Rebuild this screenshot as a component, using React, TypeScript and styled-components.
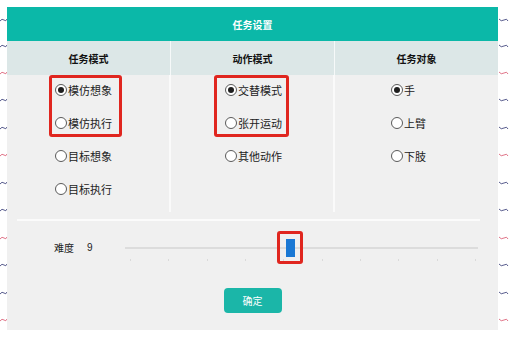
import styled, { createGlobalStyle } from "styled-components";

const GlobalStyle = createGlobalStyle`
  html, body {
    margin: 0;
    padding: 0;
    background: #ffffff;
  }
  body {
    font-family: "Noto Sans CJK SC", "Noto Sans", sans-serif;
  }
`;

type Option = { label: string; checked?: boolean };
type Column = {
  title: string;
  indent: number;
  options: Option[];
  mark?: { left: number; width: number };
};

const columns: Column[] = [
  {
    title: "任务模式",
    indent: 48,
    options: [
      { label: "模仿想象", checked: true },
      { label: "模仿执行" },
      { label: "目标想象" },
      { label: "目标执行" },
    ],
    mark: { left: 42, width: 73 },
  },
  {
    title: "动作模式",
    indent: 54,
    options: [
      { label: "交替模式", checked: true },
      { label: "张开运动" },
      { label: "其他动作" },
    ],
    mark: { left: 43, width: 75 },
  },
  {
    title: "任务对象",
    indent: 56,
    options: [{ label: "手", checked: true }, { label: "上臂" }, { label: "下肢" }],
  },
];

const difficulty = { value: 9, min: 0, max: 19.2 };

function Waves({ side }: { side: "left" | "right" }) {
  const ys = [20, 46, 73, 100, 128, 155, 183, 210, 238, 265, 293, 320];
  const w = side === "left" ? 7 : 11;
  return (
    <WaveStrip width={w} height={341} viewBox={`0 0 ${w} 341`}>
      {ys.map((y, i) => (
        <path
          key={y}
          d={
            side === "left"
              ? `M0 ${y + 1} Q2 ${y - 2} 4 ${y} T7 ${y - 1}`
              : `M1 ${y - 1} Q3 ${y + 2} 6 ${y} T10 ${y + 1}`
          }
          stroke={i % 3 === 2 ? "#d8506a" : "#2d3270"}
          strokeWidth={0.8}
          fill="none"
        />
      ))}
    </WaveStrip>
  );
}

export default function App() {
  const pct = ((difficulty.value - difficulty.min) / (difficulty.max - difficulty.min)) * 100;
  return (
    <>
      <GlobalStyle />
      <Page>
        <Waves side="left" />
        <Dialog>
          <Title>任务设置</Title>
          <HeadRow>
            {columns.map((c) => (
              <HeadCell key={c.title}>{c.title}</HeadCell>
            ))}
          </HeadRow>
          <Body>
            {columns.map((c) => (
              <OptionColumn key={c.title} indent={c.indent}>
                {c.options.map((o) => (
                  <RadioRow key={o.label}>
                    <RadioDot checked={!!o.checked} />
                    {o.label}
                  </RadioRow>
                ))}
                {c.mark && <Mark style={{ left: c.mark.left, width: c.mark.width }} />}
              </OptionColumn>
            ))}
          </Body>
          <Separator />
          <DifficultyRow>
            <Label>难度</Label>
            <Value>{difficulty.value}</Value>
            <Slider>
              <Track />
              <Ticks>
                {Array.from({ length: 10 }).map((_, i) => (
                  <Tick key={i} />
                ))}
              </Ticks>
              <Thumb style={{ left: `${pct}%` }}>
                <ThumbBar />
              </Thumb>
            </Slider>
          </DifficultyRow>
          <Footer>
            <ConfirmButton>确定</ConfirmButton>
          </Footer>
        </Dialog>
        <Waves side="right" />
      </Page>
    </>
  );
}

const Page = styled.div`
  display: flex;
  align-items: flex-start;
  width: 509px;
  height: 341px;
  overflow: hidden;
`;

const WaveStrip = styled.svg`
  flex: none;
  display: block;
`;

const Dialog = styled.div`
  flex: none;
  width: 491px;
  height: 323px;
  margin-top: 7px;
  background: #f0f0f0;
  display: flex;
  flex-direction: column;
`;

const Title = styled.div`
  height: 34px;
  background: #0bb8a8;
  color: #ffffff;
  font-size: 10px;
  font-weight: 700;
  display: flex;
  align-items: center;
  justify-content: center;
`;

const HeadRow = styled.div`
  display: grid;
  grid-template-columns: 163px 163px 1fr;
  column-gap: 1px;
  background: #f6f9f9;
  height: 34px;
`;

const HeadCell = styled.div`
  background: #dce7e7;
  color: #111;
  font-size: 10px;
  font-weight: 700;
  display: flex;
  align-items: center;
  justify-content: center;
`;

const Body = styled.div`
  display: grid;
  grid-template-columns: 162px 162px 1fr;
  column-gap: 2px;
  background: #fafafa;
  height: 137px;
`;

const OptionColumn = styled.div<{ indent: number }>`
  position: relative;
  background: #f0f0f0;
  padding-left: ${(p) => p.indent}px;
  display: flex;
  flex-direction: column;
`;

const RadioRow = styled.label`
  height: 33px;
  display: flex;
  align-items: center;
  gap: 1px;
  font-size: 11px;
  line-height: 12px;
  color: #222;
  white-space: nowrap;
  &:first-child {
    margin-top: -2px;
  }
`;

const RadioDot = styled.span<{ checked: boolean }>`
  box-sizing: border-box;
  width: 12px;
  height: 12px;
  border-radius: 50%;
  border: 1px solid #5a5a5a;
  background: #ffffff;
  display: inline-flex;
  align-items: center;
  justify-content: center;
  &::after {
    content: "";
    width: 6px;
    height: 6px;
    border-radius: 50%;
    background: ${(p) => (p.checked ? "#1e1e1e" : "transparent")};
  }
`;

const Mark = styled.div`
  position: absolute;
  top: 0;
  height: 62px;
  box-sizing: border-box;
  border: 3px solid #e0261f;
  border-radius: 3px;
  pointer-events: none;
`;

const Separator = styled.div`
  height: 2px;
  background: #fbfbfb;
  margin: 7px 18px 0 10px;
`;

const DifficultyRow = styled.div`
  display: flex;
  align-items: center;
  height: 33px;
  margin-top: 10px;
  padding: 0 20px 0 47px;
  font-size: 10px;
  color: #222;
`;

const Label = styled.span`
  width: 33px;
`;

const Value = styled.span`
  width: 38px;
  font-family: "Liberation Sans", Arial, sans-serif;
`;

const Slider = styled.div`
  position: relative;
  flex: 1;
  height: 33px;
`;

const Track = styled.div`
  position: absolute;
  left: 0;
  right: 0;
  top: 16px;
  height: 2px;
  background: #dcdcdc;
`;

const Ticks = styled.div`
  position: absolute;
  left: 5px;
  right: 2px;
  top: 28px;
  display: flex;
  justify-content: space-between;
`;

const Tick = styled.span`
  width: 1px;
  height: 2px;
  background: #dadada;
`;

const Thumb = styled.div`
  position: absolute;
  top: 0;
  box-sizing: border-box;
  width: 26px;
  height: 33px;
  margin-left: -13px;
  border: 3px solid #e0261f;
  border-radius: 3px;
  display: flex;
  align-items: center;
  justify-content: center;
`;

const ThumbBar = styled.div`
  width: 9px;
  height: 18px;
  background: #1a78d4;
`;

const Footer = styled.div`
  display: flex;
  justify-content: center;
  margin-top: 24px;
`;

const ConfirmButton = styled.button`
  width: 58px;
  height: 25px;
  border: none;
  border-radius: 4px;
  background: #1bb6a8;
  color: #ffffff;
  font-family: "Noto Sans CJK SC", sans-serif;
  font-size: 10px;
  padding: 0;
`;
